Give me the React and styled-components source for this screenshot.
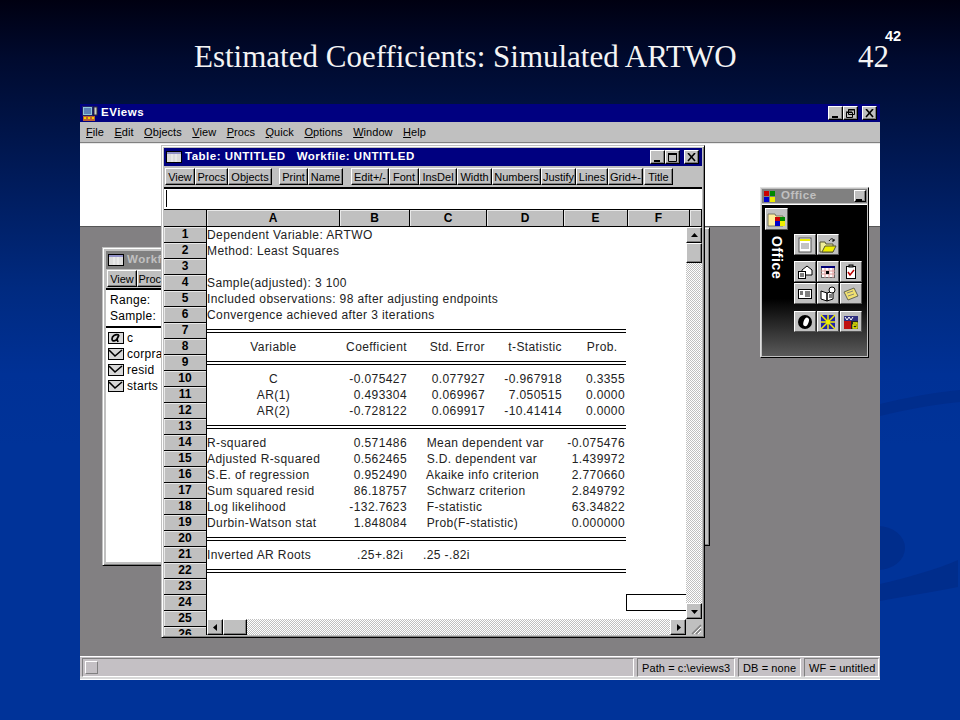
import React from 'react'
import styled, { createGlobalStyle } from 'styled-components'

const GlobalStyle = createGlobalStyle`
  html, body { margin: 0; padding: 0; }
  body { width: 960px; height: 720px; overflow: hidden; background: #003399; }
`

const winFont = `"Liberation Sans", Arial, sans-serif`

const raised = `
  background: #c0c0c0;
  border: 1px solid;
  border-color: #fff #000 #000 #fff;
  box-shadow: inset -1px -1px 0 #808080;
`
const dither = `
  background-color: #fff;
  background-image: repeating-conic-gradient(#c0c0c0 0 25%, #fff 0 50%);
  background-size: 2px 2px;
`

const Slide = styled.div`
  position: relative;
  width: 960px;
  height: 720px;
  overflow: hidden;
  display: flex;
  flex-direction: column;
  background: linear-gradient(180deg, #000011 0%, #000a2e 8%, #001a58 24%, #002a80 40%, #003196 52%, #003399 62%, #003399 100%);
`
const Swirl = styled.svg`
  position: absolute;
  left: 0;
  top: 0;
`
const SlideHead = styled.header`
  position: relative;
  height: 104px;
  flex: none;
`
const SlideTitle = styled.h1`
  margin: 0;
  position: absolute;
  left: 194px;
  top: 37px;
  font: 400 31px/40px "Liberation Serif", serif;
  color: #f4f4f4;
  white-space: nowrap;
`
const SlideNum = styled.span`
  position: absolute;
  left: 858px;
  top: 37px;
  font: 400 31px/40px "Liberation Serif", serif;
  color: #f4f4f4;
`
const SmallNum = styled.span`
  position: absolute;
  left: 885px;
  top: 28px;
  font: 700 14.5px/16px "Liberation Sans", sans-serif;
  color: #fff;
`

const MainWin = styled.div`
  position: relative;
  margin-left: 80px;
  width: 800px;
  height: 576px;
  display: flex;
  flex-direction: column;
  background: #c0c0c0;
  font-family: ${winFont};
  color: #000;
`
const Caption = styled.div`
  flex: none;
  display: flex;
  align-items: center;
  height: ${p => p.$h || 18}px;
  padding: 0 ${p => p.$pr || 2}px 0 2px;
  gap: 3px;
  background: ${p => (p.$dim ? '#808080' : '#000080')};
  color: ${p => (p.$dim ? '#c0c0c0' : '#fff')};
  font: 700 11.5px/1 ${winFont};
  letter-spacing: 0.5px;
  white-space: pre;
  overflow: hidden;
  svg { flex: none; }
`
const CaptionText = styled.span`
  flex: 1;
`
const WinButton = styled.span`
  ${raised}
  box-sizing: border-box;
  flex: none;
  width: ${p => p.$w || 15}px;
  height: ${p => p.$w ? p.$w : 14}px;
  display: flex;
  align-items: center;
  justify-content: center;
  margin-left: ${p => p.$gap || -3}px;
  svg { display: block; }
`
const MenuBar = styled.nav`
  flex: none;
  height: 20px;
  display: flex;
  align-items: center;
  padding-left: 6px;
  gap: 10.5px;
  font-size: 11px;
  letter-spacing: 0.05px;
  border-bottom: 1px solid #808080;
`
const MenuItem = styled.span`
  u { text-underline-offset: 1px; }
`
const Work = styled.div`
  position: relative;
  flex: 1;
  display: flex;
  flex-direction: column;
  min-height: 0;
`
const WhiteBand = styled.div`
  flex: none;
  height: 82px;
  background: #fff;
  border-top: 1px solid #e8e8e8;
  border-bottom: 1px solid #555;
`
const GrayArea = styled.div`
  flex: 1;
  background: #828082;
`
const StatusBar = styled.footer`
  flex: none;
  height: 24px;
  box-sizing: border-box;
  padding: 1px 1px 0 2px;
  display: flex;
  gap: 3px;
  font-size: 11px;
  letter-spacing: 0.1px;
  background: #c4c0c4;
  border-top: 1px solid #fff;
  border-bottom: 1px solid #fff;
  box-shadow: inset 0 -3px 0 #d8d8d8;
`
const StatusCell = styled.div`
  box-sizing: border-box;
  height: 19px;
  width: ${p => (p.$w ? p.$w + 'px' : 'auto')};
  flex: ${p => (p.$w ? 'none' : 1)};
  display: flex;
  align-items: center;
  padding-left: 4px;
  border: 1px solid;
  border-color: #808080 #fff #fff #808080;
  white-space: nowrap;
`
const StatusBox = styled.div`
  box-sizing: border-box;
  width: 13px;
  height: 13px;
  margin-left: -2px;
  border: 1px solid;
  border-color: #fff #808080 #808080 #fff;
`

const Window = styled.section`
  position: absolute;
  left: ${p => p.$x}px;
  top: ${p => p.$y}px;
  width: ${p => p.$w}px;
  height: ${p => p.$h}px;
  box-sizing: border-box;
  display: flex;
  flex-direction: column;
  overflow: hidden;
  background: #c0c0c0;
  border: 1px solid;
  border-color: #c0c0c0 #000 #000 #c0c0c0;
  box-shadow: inset 1px 1px 0 #fff, inset -1px -1px 0 #808080;
  padding: ${p => p.$pad ?? 2}px;
`
const ToolBar = styled.div`
  flex: none;
  height: ${p => p.$h || 23}px;
  box-sizing: border-box;
  display: flex;
  align-items: center;
  padding-left: 1px;
  border-bottom: 2px solid #000;
`
const ToolGroup = styled.div`
  display: flex;
  margin-right: ${p => p.$gap || 0}px;
`
const ToolButton = styled.span`
  ${raised}
  box-sizing: border-box;
  height: 17px;
  width: ${p => p.$w}px;
  flex: none;
  display: flex;
  align-items: center;
  justify-content: center;
  font-size: 11px;
  overflow: hidden;
  white-space: nowrap;
`
const EditLine = styled.div`
  flex: none;
  height: 21px;
  box-sizing: border-box;
  background: #fff;
  border-bottom: 1px solid #000;
  padding: 1px 0 0 2px;
`
const Caret = styled.div`
  width: 1px;
  height: 17px;
  background: #000;
`

const Sheet = styled.div`
  flex: 1;
  min-height: 0;
  display: grid;
  grid-template-columns: 43px 1fr;
  grid-template-rows: 17px 1fr;
  overflow: hidden;
`
const Corner = styled.div`
  background: #c0c0c0;
  border-right: 1px solid #000;
  border-bottom: 1px solid #000;
`
const ColHeads = styled.div`
  display: flex;
  background: #c0c0c0;
  border-bottom: 1px solid #000;
`
const ColHead = styled.div`
  box-sizing: border-box;
  width: ${p => p.$w}px;
  flex: none;
  border-right: 1px solid #000;
  text-align: center;
  font: 700 12px/16px ${winFont};
  box-shadow: inset 1px 1px 0 #e8e8e8;
`
const RowHeads = styled.div`
  overflow: hidden;
  border-right: 1px solid #000;
`
const RowHead = styled.div`
  box-sizing: border-box;
  height: 16px;
  background: #c0c0c0;
  border-bottom: 1px solid #000;
  box-shadow: inset 1px 1px 0 #e8e8e8;
  text-align: center;
  font: 700 12px/15px ${winFont};
`
const Pane = styled.div`
  position: relative;
  background: #fff;
  overflow: hidden;
  display: grid;
  grid-template-columns: 1fr 16px;
  grid-template-rows: 1fr 16px;
`
const Rows = styled.div`
  position: relative;
  overflow: hidden;
  grid-column: 1 / 3;
  grid-row: 1 / 3;
`
const Row = styled.div`
  height: 16px;
  display: grid;
  grid-template-columns: 133px 68px 78px 77px 63px;
  font-size: 12px;
  line-height: 16px;
  letter-spacing: 0.4px;
  white-space: pre;
`
const Cell = styled.div`
  text-align: ${p => p.$align || 'left'};
  padding-right: ${p => (p.$align === 'right' ? 1 : 0)}px;
  color: #222;
`
const RuleRow = styled.div`
  height: 16px;
  width: 419px;
  box-sizing: border-box;
  padding-top: 6px;
  &::before {
    content: '';
    display: block;
    height: 1px;
    background: #000;
    box-shadow: 0 3px 0 #000;
  }
`
const PickedCell = styled.div`
  position: absolute;
  left: 419px;
  top: 367px;
  width: 60px;
  height: 17px;
  box-sizing: border-box;
  border: 1px solid #000;
  border-right: 0;
`
const VScroll = styled.div`
  position: absolute;
  right: 0;
  top: 0;
  bottom: 16px;
  width: 16px;
  display: flex;
  flex-direction: column;
  ${dither}
`
const HScroll = styled.div`
  position: absolute;
  left: 0;
  right: 16px;
  bottom: 0;
  height: 16px;
  display: flex;
  ${dither}
`
const ScrollBtn = styled.span`
  ${raised}
  box-sizing: border-box;
  flex: none;
  width: ${p => p.$w || 16}px;
  height: ${p => p.$h || 16}px;
  display: flex;
  align-items: center;
  justify-content: center;
`
const Grow = styled.div`
  flex: 1;
`
const Grip = styled.svg`
  position: absolute;
  right: 0;
  bottom: 0;
  background: #c0c0c0;
`

const WorkInfo = styled.div`
  flex: none;
  background: #fff;
  border-bottom: 2px solid #000;
  padding: 2px 0 2px 4px;
  font-size: 12px;
  line-height: 16px;
  letter-spacing: 0.3px;
`
const SeriesList = styled.ul`
  flex: 1;
  margin: 0;
  background: #fff;
  list-style: none;
  padding: 2px 0 0 2px;
  font-size: 12px;
  letter-spacing: 0.3px;
`
const SeriesItem = styled.li`
  display: flex;
  align-items: center;
  gap: 3px;
  height: 16px;
  white-space: nowrap;
  svg { flex: none; }
`

const Palette = styled.aside`
  position: absolute;
  left: 680px;
  top: 44px;
  width: 109px;
  height: 171px;
  box-sizing: border-box;
  background: #c0c0c0;
  border: 1px solid;
  border-color: #e0e0e0 #000 #000 #e0e0e0;
  padding: 1px;
  display: flex;
  flex-direction: column;
`
const PaletteBody = styled.div`
  flex: 1;
  margin-top: 1px;
  border-top: 1px solid #fff;
  background: linear-gradient(180deg, #000 0%, #000 62%, #5a5a5a 100%);
  display: grid;
  grid-template-columns: 29px 1fr;
  padding: 3px 0 0 3px;
`
const PaletteLeft = styled.div`
  display: flex;
  flex-direction: column;
  align-items: center;
  gap: 6px;
  width: 23px;
`
const OfficeWord = styled.div`
  writing-mode: vertical-rl;
  color: #fff;
  font: 700 14px/14px ${winFont};
  letter-spacing: 0.6px;
`
const PaletteGrid = styled.div`
  display: flex;
  flex-direction: column;
  padding-top: 26px;
`
const IconRow = styled.div`
  display: flex;
  gap: 1px;
  margin-bottom: ${p => p.$gap || 1}px;
`
const OfficeBtn = styled.span`
  box-sizing: border-box;
  flex: none;
  width: ${p => p.$big ? 23 : 22}px;
  height: ${p => p.$big ? 22 : 21}px;
  background: #c0c0c0;
  border: 1px solid;
  border-color: #fff #555 #555 #fff;
  display: flex;
  align-items: center;
  justify-content: center;
`
const PaletteLabel = styled(CaptionText)`
  margin-left: 3px;
`

const Min = () => (
  <svg width="10" height="9"><rect x="1" y="7" width="6" height="2" fill="#000" /></svg>
)
const Max = () => (
  <svg width="10" height="9"><path d="M0.5 1.5h8v7h-8z" fill="none" stroke="#000" /><rect x="0" y="0" width="9" height="2" fill="#000" /></svg>
)
const Restore = () => (
  <svg width="10" height="9"><path d="M2.5 .5h6v5h-6zM.5 3.5h6v5h-6z" fill="#c0c0c0" stroke="#000" /><path d="M2 1h7M0 3h6" stroke="#000" /></svg>
)
const CloseX = () => (
  <svg width="10" height="9"><path d="M1 0l7 8M8 0L1 8" stroke="#000" strokeWidth="1.6" /></svg>
)
const Arrow = ({ d }) => {
  const pts = { up: '1,6 8,6 4.5,2', down: '1,3 8,3 4.5,7', left: '6,1 6,8 2,4.5', right: '3,1 3,8 7,4.5' }
  return <svg width="9" height="9"><polygon points={pts[d]} fill="#000" /></svg>
}
const TableGlyph = () => (
  <svg width="16" height="12">
    <rect x="0" y="0" width="16" height="12" fill="#000" />
    <rect x="1" y="1" width="14" height="10" fill="#dcdcdc" />
    <rect x="1" y="1" width="14" height="2" fill="#9090c8" />
    <path d="M6 3v8M10 3v8" stroke="#f4f4f4" />
  </svg>
)
const AppGlyph = () => (
  <svg width="16" height="15">
    <rect x="0.500" y="0.500" width="10" height="9" fill="#8fc8d8" stroke="#226" />
    <path d="M2 3h7M2 5h7M2 7h7" stroke="#2a3a9a" />
    <rect x="12" y="1" width="3" height="8" fill="#ccc" stroke="#333" />
    <rect x="1" y="10" width="12" height="5" fill="#c06030" />
    <path d="M2 11h2v2h-2zM6 11h2v2h-2zM10 11h2v2h-2z" fill="#f0d000" />
  </svg>
)
const SeriesGlyph = () => (
  <svg width="16" height="12">
    <rect x=".5" y=".5" width="15" height="11" fill="#d8d8d8" stroke="#000" />
    <path d="M1 2l6 6 7-6" fill="none" stroke="#000" strokeWidth="1.6" />
  </svg>
)
const AlphaGlyph = () => (
  <svg width="16" height="12">
    <rect x=".5" y=".5" width="15" height="11" fill="#d8d8d8" stroke="#000" />
    <path d="M11 3C7 2 4 4 4 7c0 3 4 2 5 0l2-4M9 7l1 3" fill="none" stroke="#000" strokeWidth="1.7" />
  </svg>
)
const OfficeFlag = () => (
  <svg width="11" height="11">
    <rect x="0" y="0" width="5" height="5" fill="#c00" />
    <rect x="6" y="0" width="5" height="5" fill="#080" />
    <rect x="0" y="6" width="5" height="5" fill="#00c" />
    <rect x="6" y="6" width="5" height="5" fill="#ee0" />
  </svg>
)

const paletteIcons = {
  folderFlag: (
    <svg width="19" height="17">
      <path d="M1 3h7l1 2h7v10H1z" fill="#ffee99" stroke="#776" />
      <rect x="8" y="6" width="5" height="4" fill="#c00" />
      <rect x="13" y="6" width="5" height="4" fill="#080" />
      <rect x="8" y="10" width="5" height="5" fill="#00c" />
      <rect x="13" y="10" width="5" height="5" fill="#ee0" />
    </svg>
  ),
  note: (
    <svg width="16" height="16">
      <rect x="2" y="1" width="12" height="14" fill="#fff" stroke="#555" />
      <rect x="3" y="2" width="10" height="2" fill="#ee0" />
      <path d="M4 7h8M4 9h8M4 11h8" stroke="#888" />
    </svg>
  ),
  open: (
    <svg width="18" height="16">
      <path d="M1 5h5l1 2h7v8H1z" fill="#ee9" stroke="#553" />
      <path d="M3 15l3-6h11l-3 6z" fill="#ee0" stroke="#553" />
      <path d="M10 4c2-3 4-3 5 0M15 4l-2 0M15 4v-2" fill="none" stroke="#000" />
    </svg>
  ),
  letter: (
    <svg width="16" height="16">
      <path d="M5 6l5-4 5 4v5H5z" fill="#fff" stroke="#000" />
      <rect x="1.500" y="7.500" width="7" height="7" fill="#fff" stroke="#000" />
      <path d="M3 10h4M3 12h4" stroke="#000" />
    </svg>
  ),
  calendar: (
    <svg width="16" height="16">
      <rect x="1.500" y="2.500" width="13" height="11" fill="#fff" stroke="#666" />
      <rect x="1" y="2" width="14" height="2" fill="#007" />
      <path d="M5 4v10M9 4v10M13 4v10M1 7h14M1 10h14" stroke="#d99" />
      <rect x="6" y="7" width="3" height="3" fill="#000" />
    </svg>
  ),
  task: (
    <svg width="16" height="16">
      <rect x="3.500" y="2.500" width="9" height="12" fill="#fff" stroke="#000" />
      <rect x="6" y="1" width="4" height="2" fill="#888" stroke="#000" />
      <path d="M5 8l2 3 4-5" fill="none" stroke="#b00" strokeWidth="1.500" />
    </svg>
  ),
  card: (
    <svg width="16" height="16">
      <rect x="1.500" y="3.500" width="13" height="9" fill="#fff" stroke="#000" />
      <rect x="3" y="5" width="3" height="4" fill="#777" />
      <path d="M8 6h5M8 8h5M8 10h5" stroke="#000" />
    </svg>
  ),
  journal: (
    <svg width="16" height="16">
      <path d="M1 5l6 2v8l-6-2zM7 7l6-2v8l-6 2z" fill="#fff" stroke="#000" />
      <circle cx="12" cy="4" r="3" fill="#fff" stroke="#000" />
      <path d="M9 9h3M9 11h3" stroke="#000" />
    </svg>
  ),
  sticky: (
    <svg width="16" height="16">
      <path d="M1 6l10-4 4 8-10 4z" fill="#f0e070" stroke="#665" />
      <path d="M4 7l6-2M5 10l6-2" stroke="#887" />
    </svg>
  ),
  mouse: (
    <svg width="16" height="16">
      <circle cx="8" cy="8" r="7" fill="#000" />
      <ellipse cx="9" cy="7.500" rx="2.500" ry="4.500" fill="#fff" transform="rotate(20 8 8)" />
    </svg>
  ),
  star: (
    <svg width="16" height="16">
      <rect x="1" y="1" width="14" height="14" fill="#22a" />
      <path d="M1 1l14 14M15 1L1 15M8 1v14M1 8h14" stroke="#ee0" strokeWidth="1.500" />
    </svg>
  ),
  dg: (
    <svg width="16" height="16">
      <rect x="1" y="2" width="14" height="13" fill="#303080" />
      <rect x="1" y="7" width="7" height="8" fill="#c01010" />
      <rect x="8" y="7" width="7" height="8" fill="#222" />
      <path d="M10 9h4v5h-4v-3h3" fill="none" stroke="#ee0" strokeWidth="1.300" />
      <path d="M2 3l2 3 2-3 2 3 2-3" fill="none" stroke="#fff" />
    </svg>
  ),
}

const menus = [
  ['F', 'ile'], ['E', 'dit'], ['O', 'bjects'], ['V', 'iew'], ['P', 'rocs'],
  ['Q', 'uick'], ['O', 'ptions'], ['W', 'indow'], ['H', 'elp'],
]

const toolGroups = [
  { gap: 7, items: [['View', 30], ['Procs', 33], ['Objects', 44]] },
  { gap: 8, items: [['Print', 29], ['Name', 35]] },
  { gap: 1, items: [['Edit+/-', 38], ['Font', 30], ['InsDel', 38], ['Width', 35], ['Numbers', 49], ['Justify', 35], ['Lines', 32], ['Grid+-', 35]] },
  { gap: 0, items: [['Title', 29]] },
]

const columns = [['A', 133], ['B', 70], ['C', 77], ['D', 77], ['E', 64], ['F', 62], ['', 12]]

const R = 'right'
const C = 'center'
// one entry per spreadsheet row, null = blank, 'rule' = double line
const rows = [
  [['Dependent Variable: ARTWO']],
  [['Method: Least Squares']],
  null,
  [['Sample(adjusted): 3 100']],
  [['Included observations: 98 after adjusting endpoints']],
  [['Convergence achieved after 3 iterations']],
  'rule',
  [['Variable', C], ['Coefficient', R], ['Std. Error', R], ['t-Statistic', R], ['Prob.  ', R]],
  'rule',
  [['C', C], ['-0.075427', R], ['0.077927', R], ['-0.967918', R], ['0.3355', R]],
  [['AR(1)', C], ['0.493304', R], ['0.069967', R], ['7.050515', R], ['0.0000', R]],
  [['AR(2)', C], ['-0.728122', R], ['0.069917', R], ['-10.41414', R], ['0.0000', R]],
  'rule',
  [['R-squared'], ['0.571486', R], ['     Mean dependent var'], [''], ['-0.075476', R]],
  [['Adjusted R-squared'], ['0.562465', R], ['     S.D. dependent var'], [''], ['1.439972', R]],
  [['S.E. of regression'], ['0.952490', R], ['     Akaike info criterion'], [''], ['2.770660', R]],
  [['Sum squared resid'], ['86.18757', R], ['     Schwarz criterion'], [''], ['2.849792', R]],
  [['Log likelihood'], ['-132.7623', R], ['     F-statistic'], [''], ['63.34822', R]],
  [['Durbin-Watson stat'], ['1.848084', R], ['     Prob(F-statistic)'], [''], ['0.000000', R]],
  'rule',
  [['Inverted AR Roots'], ['.25+.82i ', R], ['    .25 -.82i']],
  'rule',
  null,
  null,
  null,
  null,
]

const series = ['corpra', 'resid', 'starts']

const paletteRows = [
  { gap: 6, icons: ['note', 'open'] },
  { gap: 1, icons: ['letter', 'calendar', 'task'] },
  { gap: 7, icons: ['card', 'journal', 'sticky'] },
  { gap: 0, icons: ['mouse', 'star', 'dg'] },
]

const App = () => (
  <>
    <GlobalStyle />
    <Slide>
      <Swirl width="960" height="720" viewBox="0 0 960 720">
        <path d="M880 404 C905 398 935 392 960 390 L960 402 C935 404 905 410 880 416Z" fill="#002d8c" />
        <ellipse cx="878" cy="548" rx="27" ry="22" fill="#002d8c" />
        <path d="M880 584 C905 578 935 570 958 560 L958 587 C935 592 905 596 880 601Z" fill="#002d8c" />
      </Swirl>
      <SlideHead>
        <SlideTitle>Estimated Coefficients: Simulated ARTWO</SlideTitle>
        <SlideNum>42</SlideNum>
        <SmallNum>42</SmallNum>
      </SlideHead>
      <MainWin>
        <Caption $pr={3}>
          <AppGlyph />
          <CaptionText>EViews</CaptionText>
          <WinButton><Min /></WinButton>
          <WinButton><Restore /></WinButton>
          <WinButton $gap={1}><CloseX /></WinButton>
        </Caption>
        <MenuBar>
          {menus.map(([key, rest], i) => (
            <MenuItem key={i}><u>{key}</u>{rest}</MenuItem>
          ))}
        </MenuBar>
        <Work>
          <WhiteBand />
          <GrayArea />

          <Window $x={420} $y={84} $w={210} $h={319} />

          <Window $x={22} $y={104} $w={64} $h={319} $pad={3}>
            <Caption $dim>
              <TableGlyph />
              <CaptionText>Workfile</CaptionText>
            </Caption>
            <ToolBar $h={21}>
              <ToolGroup>
                <ToolButton $w={30}>View</ToolButton>
                <ToolButton $w={31}>Procs</ToolButton>
              </ToolGroup>
            </ToolBar>
            <WorkInfo>
              Range:
              <br />
              Sample:
            </WorkInfo>
            <SeriesList>
              <SeriesItem><AlphaGlyph /> c</SeriesItem>
              {series.map(name => (
                <SeriesItem key={name}><SeriesGlyph /> {name}</SeriesItem>
              ))}
            </SeriesList>
          </Window>

          <Window $x={81} $y={2} $w={544} $h={493}>
            <Caption $pr={3}>
              <TableGlyph />
              <CaptionText>Table: UNTITLED   Workfile: UNTITLED</CaptionText>
              <WinButton><Min /></WinButton>
              <WinButton><Max /></WinButton>
              <WinButton $gap={1}><CloseX /></WinButton>
            </Caption>
            <ToolBar>
              {toolGroups.map((g, i) => (
                <ToolGroup key={i} $gap={g.gap}>
                  {g.items.map(([label, w]) => (
                    <ToolButton key={label} $w={w}>{label}</ToolButton>
                  ))}
                </ToolGroup>
              ))}
            </ToolBar>
            <EditLine><Caret /></EditLine>
            <Sheet>
              <Corner />
              <ColHeads>
                {columns.map(([name, w], i) => (
                  <ColHead key={i} $w={w}>{name}</ColHead>
                ))}
              </ColHeads>
              <RowHeads>
                {rows.map((_, i) => (
                  <RowHead key={i}>{i + 1}</RowHead>
                ))}
              </RowHeads>
              <Pane>
                <Rows>
                  {rows.map((row, i) => {
                    if (row === 'rule') return <RuleRow key={i} />
                    if (!row) return <Row key={i} />
                    return (
                      <Row key={i}>
                        {row.map(([text, align], j) => (
                          <Cell key={j} $align={align}>{text}</Cell>
                        ))}
                      </Row>
                    )
                  })}
                  <PickedCell />
                </Rows>
                <VScroll>
                  <ScrollBtn><Arrow d="up" /></ScrollBtn>
                  <ScrollBtn $h={20} />
                  <Grow />
                  <ScrollBtn><Arrow d="down" /></ScrollBtn>
                </VScroll>
                <HScroll>
                  <ScrollBtn><Arrow d="left" /></ScrollBtn>
                  <ScrollBtn $w={24} />
                  <Grow />
                  <ScrollBtn><Arrow d="right" /></ScrollBtn>
                </HScroll>
                <Grip width="16" height="16">
                  <path d="M15 6L6 15M15 10l-5 5" stroke="#808080" strokeWidth="1.500" />
                  <path d="M15 8l-7 7M15 12l-3 3" stroke="#fff" />
                </Grip>
              </Pane>
            </Sheet>
          </Window>

          <Palette>
            <Caption $dim $h={14} $pr={1}>
              <OfficeFlag />
              <PaletteLabel>Office</PaletteLabel>
              <WinButton $w={12}><Min /></WinButton>
            </Caption>
            <PaletteBody>
              <PaletteLeft>
                <OfficeBtn $big>{paletteIcons.folderFlag}</OfficeBtn>
                <OfficeWord>Office</OfficeWord>
              </PaletteLeft>
              <PaletteGrid>
                {paletteRows.map((r, i) => (
                  <IconRow key={i} $gap={r.gap}>
                    {r.icons.map(name => (
                      <OfficeBtn key={name}>{paletteIcons[name]}</OfficeBtn>
                    ))}
                  </IconRow>
                ))}
              </PaletteGrid>
            </PaletteBody>
          </Palette>
        </Work>
        <StatusBar>
          <StatusCell><StatusBox /></StatusCell>
          <StatusCell $w={98}>Path = c:\eviews3</StatusCell>
          <StatusCell $w={63}>DB = none</StatusCell>
          <StatusCell $w={75}>WF = untitled</StatusCell>
        </StatusBar>
      </MainWin>
    </Slide>
  </>
)

export default App
